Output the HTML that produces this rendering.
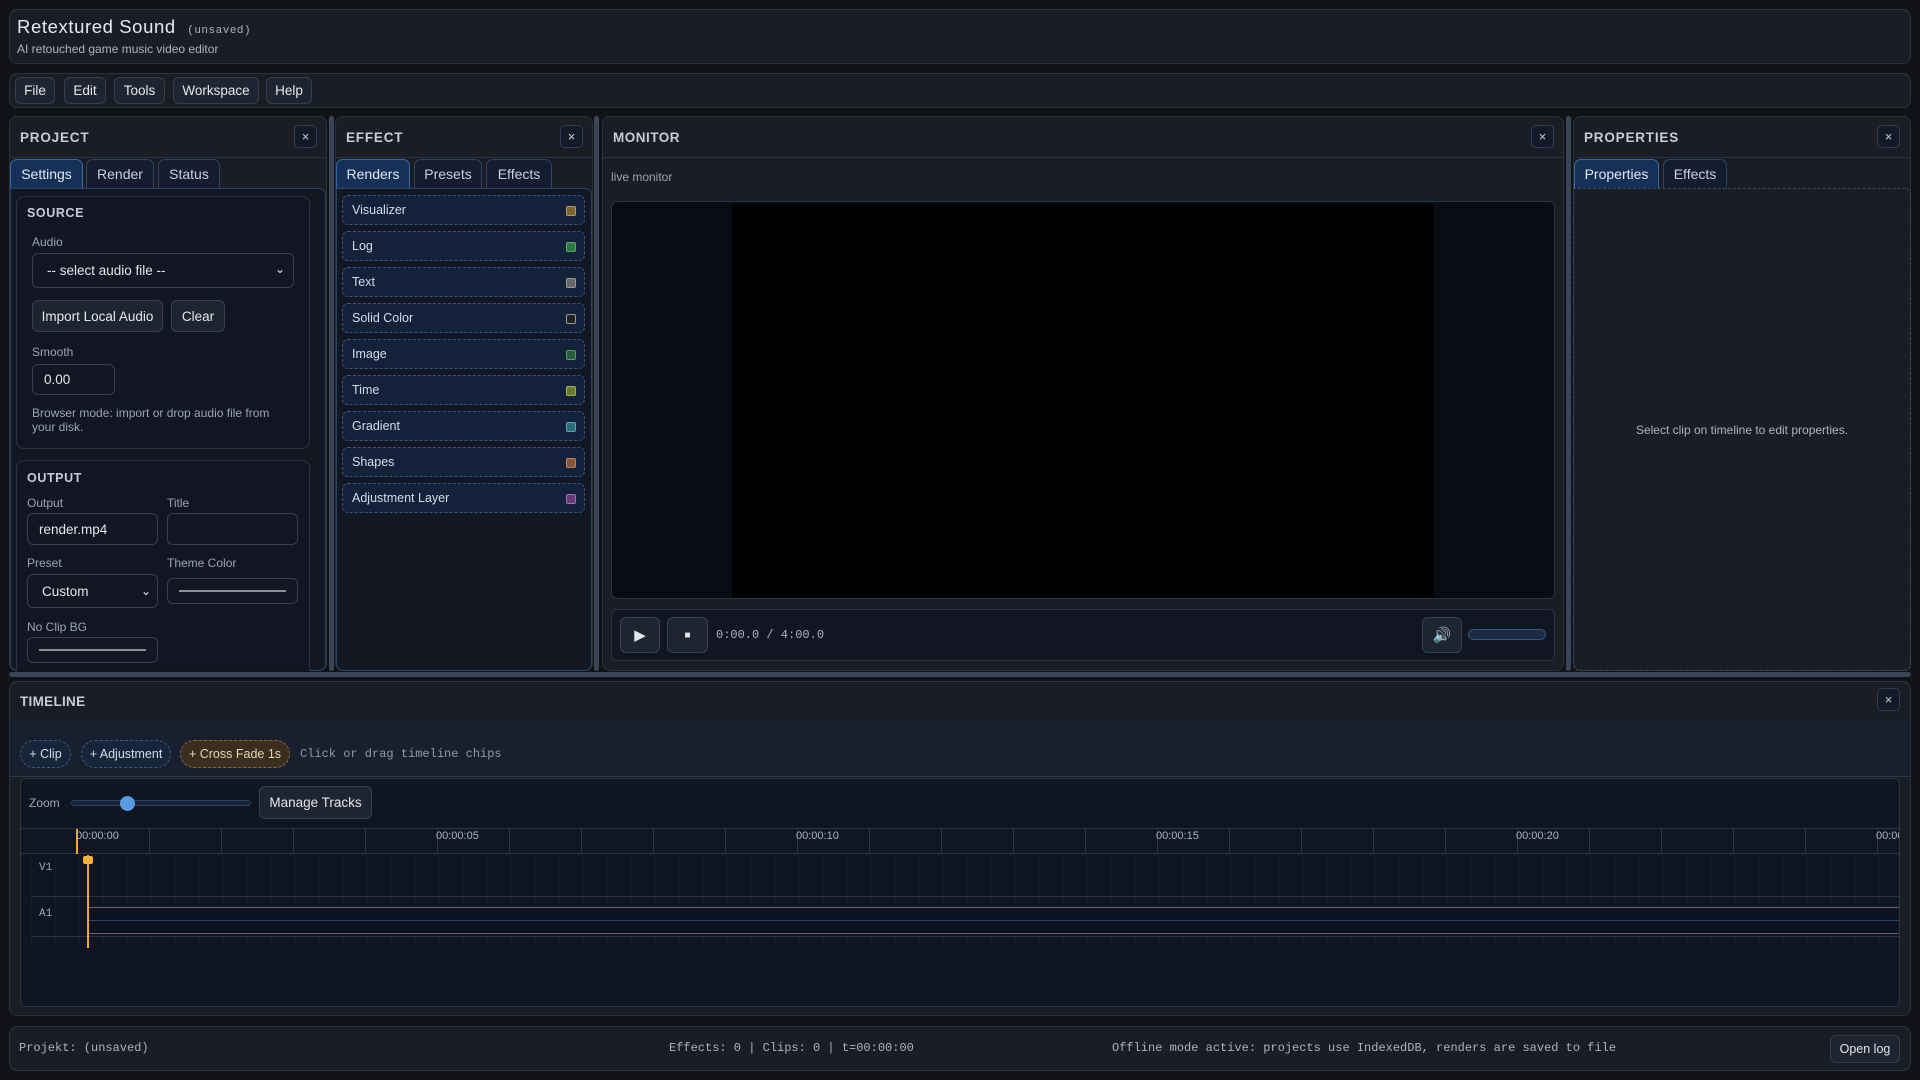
<!DOCTYPE html>
<html><head><meta charset="utf-8"><style>
*{box-sizing:border-box;margin:0;padding:0}
body{width:1920px;height:1080px;background:#111317;font-family:"Liberation Sans",sans-serif;color:#d5dbe5;position:relative;overflow:hidden;font-size:13px}
.a{position:absolute}
.box{position:absolute;background:#1a1d24;border:1px solid #2a3240;border-radius:8px}
.btn{position:absolute;background:#1e2531;border:1px solid #34404f;border-radius:6px;color:#e2e7ee;font-size:13.5px;display:flex;align-items:center;justify-content:center}
.ph{position:absolute;left:0;right:0;top:0;height:41px;border-bottom:1px solid #2a3240}
.pt{position:absolute;left:10px;top:13px;font-weight:bold;font-size:13.5px;letter-spacing:.8px;color:#c5cdd8}
.x{position:absolute;width:23px;height:23px;border:1px solid #2c3e58;border-radius:5px;background:#131a26;color:#c5cdd8;font-size:13px;display:flex;align-items:center;justify-content:center}
.tab{position:absolute;top:159px;height:29px;background:#131d2f;border:1px solid #2a4468;border-bottom:none;border-radius:7px 7px 0 0;color:#c8d0db;font-size:14px;display:flex;align-items:center;justify-content:center}
.tab.on{background:#163158;border-color:#3a6aa5;color:#dfe7f2}
.content{position:absolute;background:#121722;border:1px solid #2a4468;border-radius:0 7px 7px 7px}
.sec{position:absolute;background:#111622;border:1px solid #2b3444;border-radius:8px}
.st{position:absolute;font-weight:bold;font-size:12.5px;letter-spacing:.6px;color:#c5cdd8}
.lbl{position:absolute;font-size:12px;color:#9aa5b3}
.in{position:absolute;background:#111622;border:1px solid #34404f;border-radius:6px;color:#e2e7ee;font-size:13.5px;display:flex;align-items:center;padding-left:11px}
.line{position:absolute;height:2px;background:#8a8f96}
.eit{position:absolute;left:342px;width:243px;height:30px;background:#14213a;border:1px dashed #35557f;border-radius:6px;font-size:12.5px;color:#d5dce6;padding-left:9px;display:flex;align-items:center}
.sq{position:absolute;right:8px;top:10px;width:10px;height:10px;border:1px solid #aab;border-radius:2px}
.split{position:absolute;background:#3a4656;border-radius:3px}
.mono{font-family:"Liberation Mono","DejaVu Sans Mono",monospace}
.chip{position:absolute;top:740px;height:28px;border:1px dashed #3a5a85;background:#17253b;border-radius:14px;font-size:12.5px;color:#d5dce6;display:flex;align-items:center;justify-content:center}
.rl{position:absolute;top:830px;font-size:11px;color:#aab3bf}
</style></head><body>

<div class="box" style="left:9px;top:9px;width:1902px;height:55px;background:#1a1d24"></div>
<div class="a" style="left:17px;top:16px;font-size:18.5px;color:#e6eaf0;letter-spacing:.6px">Retextured Sound &nbsp;<span class="mono" style="font-size:11px;color:#aab3bf;letter-spacing:.5px">(unsaved)</span></div>
<div class="a" style="left:17px;top:42px;font-size:12px;color:#aab3bf">AI retouched game music video editor</div>

<div class="box" style="left:9px;top:73px;width:1902px;height:35px"></div>
<div class="btn" style="left:15px;top:77px;width:40px;height:27px">File</div>
<div class="btn" style="left:64px;top:77px;width:42px;height:27px">Edit</div>
<div class="btn" style="left:114px;top:77px;width:51px;height:27px">Tools</div>
<div class="btn" style="left:173px;top:77px;width:86px;height:27px">Workspace</div>
<div class="btn" style="left:266px;top:77px;width:46px;height:27px">Help</div>

<div class="box" style="left:9px;top:116px;width:318px;height:555px">
 <div class="ph"><div class="pt">PROJECT</div><div class="x" style="left:284px;top:8px">×</div></div>
</div>
<div class="content" style="left:10px;top:188px;width:316px;height:483px"></div>
<div class="tab on" style="left:10px;width:73px">Settings</div>
<div class="tab" style="left:86px;width:68px">Render</div>
<div class="tab" style="left:158px;width:62px">Status</div>
<div class="sec" style="left:16px;top:196px;width:294px;height:253px"></div>
<div class="st" style="left:27px;top:206px">SOURCE</div>
<div class="lbl" style="left:32px;top:235px">Audio</div>
<div class="in" style="left:32px;top:253px;width:262px;height:35px;padding-left:14px">-- select audio file --<span class="a" style="right:8px;top:8px;font-size:12px">&#8964;</span></div>
<div class="btn" style="left:32px;top:300px;width:131px;height:32px">Import Local Audio</div>
<div class="btn" style="left:171px;top:300px;width:54px;height:32px">Clear</div>
<div class="lbl" style="left:32px;top:345px">Smooth</div>
<div class="in" style="left:32px;top:364px;width:83px;height:31px">0.00</div>
<div class="lbl" style="left:32px;top:406px;line-height:14px">Browser mode: import or drop audio file from<br>your disk.</div>
<div class="sec" style="left:16px;top:460px;width:294px;height:211px;border-bottom:none;border-radius:8px 8px 0 0"></div>
<div class="st" style="left:27px;top:471px">OUTPUT</div>
<div class="lbl" style="left:27px;top:496px">Output</div>
<div class="lbl" style="left:167px;top:496px">Title</div>
<div class="in" style="left:27px;top:513px;width:131px;height:32px">render.mp4</div>
<div class="in" style="left:167px;top:513px;width:131px;height:32px"></div>
<div class="lbl" style="left:27px;top:556px">Preset</div>
<div class="lbl" style="left:167px;top:556px">Theme Color</div>
<div class="in" style="left:27px;top:574px;width:131px;height:34px;padding-left:14px">Custom<span class="a" style="right:6px;top:9px;font-size:12px">&#8964;</span></div>
<div class="in" style="left:167px;top:578px;width:131px;height:26px"><div class="line" style="left:11px;right:11px;top:11px"></div></div>
<div class="lbl" style="left:27px;top:620px">No Clip BG</div>
<div class="in" style="left:27px;top:637px;width:131px;height:26px"><div class="line" style="left:11px;right:11px;top:11px"></div></div>

<div class="split" style="left:329px;top:116px;width:5px;height:555px"></div>

<div class="box" style="left:335px;top:116px;width:258px;height:555px">
 <div class="ph"><div class="pt">EFFECT</div><div class="x" style="left:224px;top:8px">×</div></div>
</div>
<div class="content" style="left:336px;top:188px;width:256px;height:483px"></div>
<div class="tab on" style="left:336px;width:74px">Renders</div>
<div class="tab" style="left:414px;width:68px">Presets</div>
<div class="tab" style="left:486px;width:66px">Effects</div>
<div class="eit" style="top:195px">Visualizer<div class="sq" style="background:#7a6530;border-color:#b59a55"></div></div>
<div class="eit" style="top:231px">Log<div class="sq" style="background:#2e7a3e;border-color:#58a868"></div></div>
<div class="eit" style="top:267px">Text<div class="sq" style="background:#666;border-color:#999"></div></div>
<div class="eit" style="top:303px">Solid Color<div class="sq" style="background:#222;border-color:#999"></div></div>
<div class="eit" style="top:339px">Image<div class="sq" style="background:#2a5a3a;border-color:#5a9a6a"></div></div>
<div class="eit" style="top:375px">Time<div class="sq" style="background:#6a7a2a;border-color:#a0b050"></div></div>
<div class="eit" style="top:411px">Gradient<div class="sq" style="background:#2a6a7a;border-color:#5aa0b0"></div></div>
<div class="eit" style="top:447px">Shapes<div class="sq" style="background:#8a5535;border-color:#c08060"></div></div>
<div class="eit" style="top:483px">Adjustment Layer<div class="sq" style="background:#6a3a7a;border-color:#a070b0"></div></div>

<div class="split" style="left:594px;top:116px;width:5px;height:555px"></div>

<div class="box" style="left:602px;top:116px;width:962px;height:555px">
 <div class="ph"><div class="pt" style="letter-spacing:.5px">MONITOR</div><div class="x" style="left:928px;top:8px">×</div></div>
</div>
<div class="a" style="left:611px;top:170px;font-size:12px;color:#9aa5b3">live monitor</div>
<div class="a" style="left:611px;top:201px;width:944px;height:398px;background:#090c12;border:1px solid #2b3444;border-radius:6px;overflow:hidden"><div class="a" style="left:120px;top:2px;width:702px;height:394px;background:#000"></div></div>
<div class="a" style="left:611px;top:609px;width:944px;height:52px;background:#111622;border:1px solid #2b3444;border-radius:6px"></div>
<div class="btn" style="left:620px;top:617px;width:40px;height:36px;font-size:15px">&#9654;</div>
<div class="btn" style="left:667px;top:617px;width:41px;height:36px;font-size:10px">&#9632;</div>
<div class="a mono" style="left:716px;top:628px;font-size:12px;color:#aab3bf">0:00.0 / 4:00.0</div>
<div class="btn" style="left:1422px;top:617px;width:40px;height:36px;font-size:15px">&#128266;</div>
<div class="a" style="left:1468px;top:629px;width:78px;height:11px;background:#1b2b44;border:1px solid #35557f;border-radius:6px"></div>

<div class="split" style="left:1566px;top:116px;width:5px;height:555px"></div>

<div class="box" style="left:1573px;top:116px;width:338px;height:555px">
 <div class="ph"><div class="pt">PROPERTIES</div><div class="x" style="left:303px;top:8px">×</div></div>
</div>
<div class="a" style="left:1573px;top:188px;width:338px;height:483px;border:1px dashed #3a4860;border-radius:0 6px 6px 6px"></div>
<div class="tab on" style="left:1574px;width:85px">Properties</div>
<div class="tab" style="left:1663px;width:64px">Effects</div>
<div class="a" style="left:1573px;top:423px;width:338px;text-align:center;font-size:12px;color:#aab3bf">Select clip on timeline to edit properties.</div>

<div class="split" style="left:9px;top:672px;width:1902px;height:5px"></div>

<div class="box" style="left:9px;top:681px;width:1902px;height:335px">
 <div class="ph" style="height:39px"><div class="pt" style="top:12px;letter-spacing:.3px">TIMELINE</div><div class="x" style="left:1867px;top:6px">×</div></div>
</div>
<div class="a" style="left:10px;top:720px;width:1900px;height:57px;background:#182030;border-bottom:1px solid #2b3a50"></div>
<div class="chip" style="left:20px;width:51px">+ Clip</div>
<div class="chip" style="left:81px;width:90px">+ Adjustment</div>
<div class="chip" style="left:180px;width:110px;background:#3a2f1e;border-color:#8a6a3a;color:#e8d6b0">+ Cross Fade 1s</div>
<div class="a mono" style="left:300px;top:747px;font-size:12px;color:#8f99a6">Click or drag timeline chips</div>

<div class="a" style="left:20px;top:778px;width:1880px;height:229px;background:#101621;border:1px solid #2b3444;border-radius:6px;overflow:hidden">
 <div class="a" style="left:8px;top:17px;font-size:12px;color:#9aa5b3">Zoom</div>
 <div class="a" style="left:50px;top:21px;width:180px;height:6px;background:#16233a;border:1px solid #2c4060;border-radius:3px"></div>
 <div class="a" style="left:99px;top:17px;width:15px;height:15px;background:#5a9ae0;border-radius:50%"></div>
 <div class="btn" style="left:238px;top:7px;width:113px;height:33px">Manage Tracks</div>
 <div class="a" style="left:0;top:49px;width:1880px;height:26px;border-top:1px solid #2b3444;border-bottom:1px solid #2b3444;background:#111722"></div>
 <div class="a" style="left:56px;top:50px;width:1830px;height:25px;background:repeating-linear-gradient(90deg,#2e3846 0 1px,transparent 1px 72px)"></div>
 <div class="a" style="left:55px;top:50px;width:2px;height:25px;background:#f5a623"></div>
 <div class="a" style="left:10px;top:76px;width:1870px;height:93px;background:repeating-linear-gradient(90deg,#151c28 0 1px,transparent 1px 24px)"></div>
 <div class="a" style="left:10px;top:117px;width:1870px;height:1px;background:#24344c"></div>
 <div class="a" style="left:67px;top:128px;width:1813px;height:1px;background:#7a5a6a"></div>
 <div class="a" style="left:67px;top:129px;width:1813px;height:25px;background:#0c1220"></div>
 <div class="a" style="left:67px;top:141px;width:1813px;height:1px;background:#2a4468"></div>
 <div class="a" style="left:67px;top:154px;width:1813px;height:1px;background:#7a5a6a"></div>
 <div class="a" style="left:10px;top:157px;width:1870px;height:1px;background:#24344c"></div>
 <div class="a mono" style="left:18px;top:83px;font-size:11px;color:#9aa5b3">V1</div>
 <div class="a mono" style="left:18px;top:129px;font-size:11px;color:#9aa5b3">A1</div>
 <div class="a" style="left:66px;top:76px;width:2px;height:93px;background:#f5a623"></div>
 <div class="a" style="left:62px;top:77px;width:10px;height:8px;background:#f5b040;border-radius:2px"></div>
</div>
<div class="rl" style="left:76px">00:00:00</div>
<div class="rl" style="left:436px">00:00:05</div>
<div class="rl" style="left:796px">00:00:10</div>
<div class="rl" style="left:1156px">00:00:15</div>
<div class="rl" style="left:1516px">00:00:20</div>
<div class="a" style="left:1876px;top:830px;width:23px;overflow:hidden;font-size:11px;color:#aab3bf;white-space:nowrap">00:00:25</div>

<div class="box" style="left:9px;top:1026px;width:1902px;height:45px"></div>
<div class="a mono" style="left:19px;top:1041px;font-size:12px;color:#aab3bf">Projekt: (unsaved)</div>
<div class="a mono" style="left:669px;top:1041px;font-size:12px;color:#aab3bf">Effects: 0 | Clips: 0 | t=00:00:00</div>
<div class="a mono" style="left:1112px;top:1041px;font-size:12px;color:#aab3bf">Offline mode active: projects use IndexedDB, renders are saved to file</div>
<div class="btn" style="left:1830px;top:1035px;width:70px;height:28px;font-size:12.5px">Open log</div>
</body></html>
